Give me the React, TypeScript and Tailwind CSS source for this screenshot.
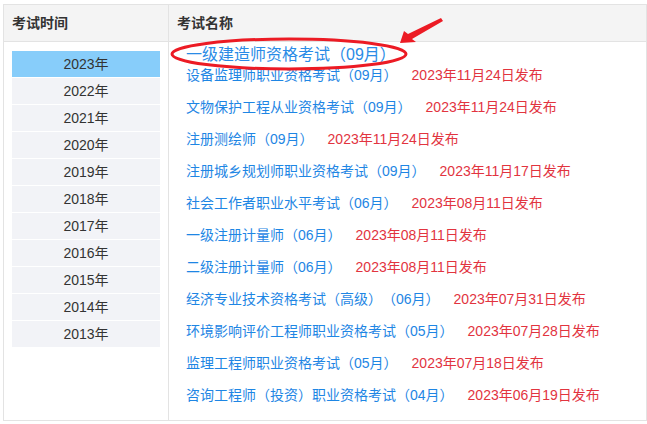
const years = ["2023", "2022", "2021", "2020", "2019", "2018", "2017", "2016", "2015", "2014", "2013"];

type Exam = { name: string; date: string };

const exams: Exam[] = [
  { name: "设备监理师职业资格考试（09月）", date: "2023年11月24日发布" },
  { name: "文物保护工程从业资格考试（09月）", date: "2023年11月24日发布" },
  { name: "注册测绘师（09月）", date: "2023年11月24日发布" },
  { name: "注册城乡规划师职业资格考试（09月）", date: "2023年11月17日发布" },
  { name: "社会工作者职业水平考试（06月）", date: "2023年08月11日发布" },
  { name: "一级注册计量师（06月）", date: "2023年08月11日发布" },
  { name: "二级注册计量师（06月）", date: "2023年08月11日发布" },
  { name: "经济专业技术资格考试（高级）（06月）", date: "2023年07月31日发布" },
  { name: "环境影响评价工程师职业资格考试（05月）", date: "2023年07月28日发布" },
  { name: "监理工程师职业资格考试（05月）", date: "2023年07月18日发布" },
  { name: "咨询工程师（投资）职业资格考试（04月）", date: "2023年06月19日发布" },
];

// red marker drawn over the screenshot (ellipse + arrow)
const Annotation = () => (
  <svg className="pointer-events-none absolute left-0 top-0" width="647" height="424">
    <ellipse cx="289" cy="54" rx="117" ry="15" fill="none" stroke="#ec1b24" strokeWidth="3" />
    <polygon
      points="400,43 404,31 408,34 441,18 443,21 412,39 416,42"
      fill="#ec1b24"
    />
  </svg>
);

export default function App() {
  return (
    <div
      className="relative h-[424px] w-[647px] bg-white pl-[3px] pt-[4px] text-[14px] text-[#333] [text-spacing-trim:space-all]"
      style={{ fontFamily: '"Liberation Sans", "Noto Sans CJK SC", sans-serif' }}
    >
      <div className="w-[644px] border border-[#e3e3e3]">
        {/* header */}
        <div className="grid h-[37px] grid-cols-[165px_1fr] border-b border-[#e3e3e3] bg-[#f4f4f4] font-bold">
          <div className="flex items-center border-r border-[#e3e3e3] pl-2">考试时间</div>
          <div className="flex items-center pl-2">考试名称</div>
        </div>

        <div className="grid grid-cols-[165px_1fr]">
          <div className="border-r border-[#e3e3e3] px-2 pt-[9px]">
            {years.map((y, i) => (
              <div
                key={y}
                className={`mb-px flex h-[26px] items-center justify-center ${
                  i === 0 ? "bg-[#87cdfa]" : "bg-[#f2f3f7]"
                }`}
              >
                {y}年
              </div>
            ))}
          </div>

          <div className="pb-[9px] pl-[17px]">
            <div className="h-[17px] whitespace-nowrap text-[16px] leading-[26px] text-[#2a8be6]">
              一级建造师资格考试（09月）
            </div>
            {exams.map((e) => (
              <div key={e.name} className="flex h-8 items-center whitespace-nowrap">
                <span className="text-[#1e86e4]">{e.name}</span>
                <span className="ml-[14px] text-[#e2343f]">{e.date}</span>
              </div>
            ))}
          </div>
        </div>
      </div>
      <Annotation />
    </div>
  );
}
